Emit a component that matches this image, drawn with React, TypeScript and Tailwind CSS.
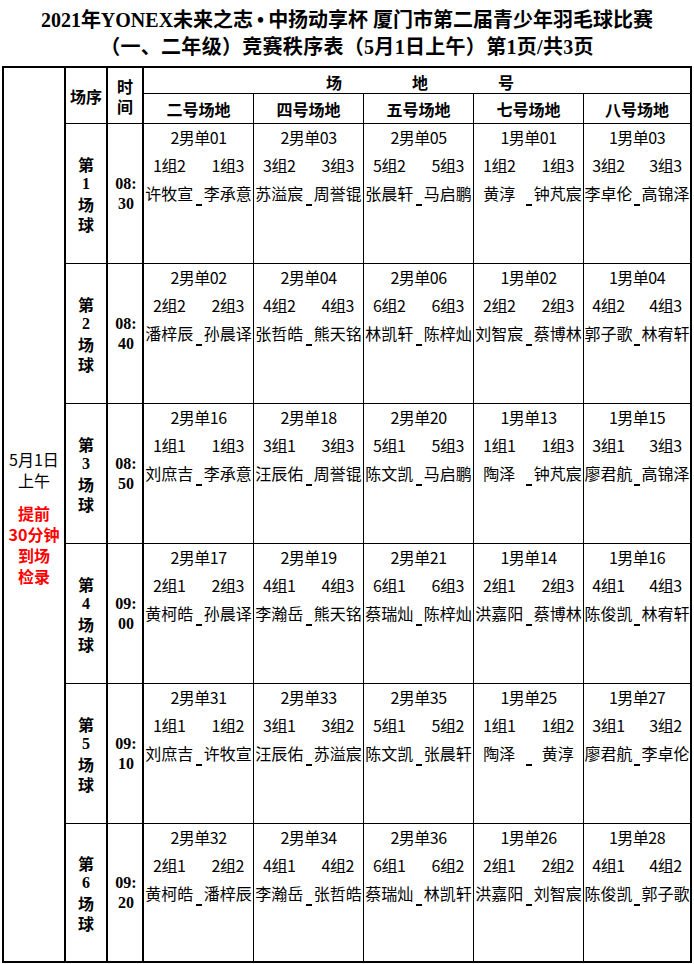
const COURTS = ["二号场地", "四号场地", "五号场地", "七号场地", "八号场地"];

type Match = { code: string; g1: string; g2: string; p1: string; p2: string };

const ROUNDS: { no: number; time: [string, string]; matches: Match[] }[] = [
  {
    no: 1,
    time: ["08:", "30"],
    matches: [
      { code: "2男单01", g1: "1组2", g2: "1组3", p1: "许牧宣", p2: "李承意" },
      { code: "2男单03", g1: "3组2", g2: "3组3", p1: "苏溢宸", p2: "周誉锟" },
      { code: "2男单05", g1: "5组2", g2: "5组3", p1: "张晨轩", p2: "马启鹏" },
      { code: "1男单01", g1: "1组2", g2: "1组3", p1: "黄淳", p2: "钟芃宸" },
      { code: "1男单03", g1: "3组2", g2: "3组3", p1: "李卓伦", p2: "高锦泽" },
    ],
  },
  {
    no: 2,
    time: ["08:", "40"],
    matches: [
      { code: "2男单02", g1: "2组2", g2: "2组3", p1: "潘梓辰", p2: "孙晨译" },
      { code: "2男单04", g1: "4组2", g2: "4组3", p1: "张哲皓", p2: "熊天铭" },
      { code: "2男单06", g1: "6组2", g2: "6组3", p1: "林凯轩", p2: "陈梓灿" },
      { code: "1男单02", g1: "2组2", g2: "2组3", p1: "刘智宸", p2: "蔡博林" },
      { code: "1男单04", g1: "4组2", g2: "4组3", p1: "郭子歌", p2: "林宥轩" },
    ],
  },
  {
    no: 3,
    time: ["08:", "50"],
    matches: [
      { code: "2男单16", g1: "1组1", g2: "1组3", p1: "刘庶吉", p2: "李承意" },
      { code: "2男单18", g1: "3组1", g2: "3组3", p1: "汪辰佑", p2: "周誉锟" },
      { code: "2男单20", g1: "5组1", g2: "5组3", p1: "陈文凯", p2: "马启鹏" },
      { code: "1男单13", g1: "1组1", g2: "1组3", p1: "陶泽", p2: "钟芃宸" },
      { code: "1男单15", g1: "3组1", g2: "3组3", p1: "廖君航", p2: "高锦泽" },
    ],
  },
  {
    no: 4,
    time: ["09:", "00"],
    matches: [
      { code: "2男单17", g1: "2组1", g2: "2组3", p1: "黄柯皓", p2: "孙晨译" },
      { code: "2男单19", g1: "4组1", g2: "4组3", p1: "李瀚岳", p2: "熊天铭" },
      { code: "2男单21", g1: "6组1", g2: "6组3", p1: "蔡瑞灿", p2: "陈梓灿" },
      { code: "1男单14", g1: "2组1", g2: "2组3", p1: "洪嘉阳", p2: "蔡博林" },
      { code: "1男单16", g1: "4组1", g2: "4组3", p1: "陈俊凯", p2: "林宥轩" },
    ],
  },
  {
    no: 5,
    time: ["09:", "10"],
    matches: [
      { code: "2男单31", g1: "1组1", g2: "1组2", p1: "刘庶吉", p2: "许牧宣" },
      { code: "2男单33", g1: "3组1", g2: "3组2", p1: "汪辰佑", p2: "苏溢宸" },
      { code: "2男单35", g1: "5组1", g2: "5组2", p1: "陈文凯", p2: "张晨轩" },
      { code: "1男单25", g1: "1组1", g2: "1组2", p1: "陶泽", p2: "黄淳" },
      { code: "1男单27", g1: "3组1", g2: "3组2", p1: "廖君航", p2: "李卓伦" },
    ],
  },
  {
    no: 6,
    time: ["09:", "20"],
    matches: [
      { code: "2男单32", g1: "2组1", g2: "2组2", p1: "黄柯皓", p2: "潘梓辰" },
      { code: "2男单34", g1: "4组1", g2: "4组2", p1: "李瀚岳", p2: "张哲皓" },
      { code: "2男单36", g1: "6组1", g2: "6组2", p1: "蔡瑞灿", p2: "林凯轩" },
      { code: "1男单26", g1: "2组1", g2: "2组2", p1: "洪嘉阳", p2: "刘智宸" },
      { code: "1男单28", g1: "4组1", g2: "4组2", p1: "陈俊凯", p2: "郭子歌" },
    ],
  },
];

const SERIF = "font-['Liberation_Serif','Noto_Sans_CJK_SC',serif]";
const SANS = "font-['Noto_Sans_CJK_SC',sans-serif]";

function MatchCell({ m, last, bottom }: { m: Match; last: boolean; bottom: boolean }) {
  return (
    <div
      className={`${bottom ? "" : "border-b"} ${last ? "" : "border-r"} border-black text-[16px] leading-[28px] text-black ${SANS}`}
    >
      <div className="-mt-[1px] text-center tracking-[-0.5px]">{m.code}</div>
      <div className="grid grid-cols-[1fr_8px_1fr] text-center tracking-[-0.5px]">
        <span>{m.g1}</span>
        <span />
        <span>{m.g2}</span>
      </div>
      <div className="grid grid-cols-[1fr_8px_1fr] items-end text-center">
        <span className="whitespace-nowrap">{m.p1}</span>
        <span className="relative h-[28px]">
          <span className="absolute left-[1px] top-[25px] h-[2px] w-[6px] bg-black" />
        </span>
        <span className="whitespace-nowrap">{m.p2}</span>
      </div>
    </div>
  );
}

export default function App() {
  return (
    <div className="w-[694px] h-[964px] bg-white text-black">
      <div className={`pt-[7px] text-center text-[20px] leading-[27px] font-bold ${SERIF}`}>
        <div>
          2021年YONEX未来之志<span className="mx-[4px]">•</span>中扬动享杯 厦门市第二届青少年羽毛球比赛
        </div>
        <div className="tracking-[0.3px]">（一、二年级）竞赛秩序表（5月1日上午）第1页/共3页</div>
      </div>

      <div className="ml-[2px] mt-[5px] w-[690px] border-2 border-black">
        <div className="grid grid-cols-[62px_42px_36px_110px_110px_110px_110px_106px] grid-rows-[26px_30px_140px_140px_140px_140px_140px_137px]">
          {/* left spanning column */}
          <div className="row-span-8 flex flex-col items-center justify-center border-r-2 border-black pt-[6px] text-[16px]">
            <div className={`text-center leading-[21px] ${SANS}`}>
              <div>5月1日</div>
              <div>上午</div>
            </div>
            <div className={`mt-[12px] text-center font-bold leading-[21px] text-[#ff0000] ${SANS}`}>
              <div>提前</div>
              <div>30分钟</div>
              <div>到场</div>
              <div>检录</div>
            </div>
          </div>

          <div className={`row-span-2 flex items-center justify-center border-r-2 border-b border-black text-[16px] font-bold ${SANS}`}>
            场序
          </div>
          <div className={`row-span-2 flex flex-col items-center justify-center border-r-2 border-b border-black text-[16px] font-bold leading-[20px] ${SANS}`}>
            <span>时</span>
            <span>间</span>
          </div>
          <div className={`col-span-5 flex items-center justify-center gap-[70px] border-b border-black pl-[6px] pt-[3px] text-[16px] font-bold ${SANS}`}>
            <span>场</span>
            <span>地</span>
            <span>号</span>
          </div>
          {COURTS.map((c, i) => (
            <div
              key={c}
              className={`flex items-center justify-center border-b border-black ${i < 4 ? "border-r" : ""} text-[16px] font-bold ${SANS}`}
            >
              {c}
            </div>
          ))}

          {ROUNDS.map((r, ri) => {
            const bottom = ri === ROUNDS.length - 1;
            return [
              <div
                key={`no-${r.no}`}
                className={`flex flex-col items-center justify-center border-r-2 ${bottom ? "" : "border-b"} border-black text-[16px] font-bold leading-[20px] ${SANS}`}
              >
                <span>第</span>
                <span className={SERIF}>{r.no}</span>
                <span>场</span>
                <span>球</span>
              </div>,
              <div
                key={`t-${r.no}`}
                className={`flex flex-col items-center justify-center border-r-2 ${bottom ? "" : "border-b"} border-black pl-[2px] text-[16px] font-bold leading-[20px] ${SERIF}`}
              >
                <span>{r.time[0]}</span>
                <span>{r.time[1]}</span>
              </div>,
              ...r.matches.map((m, mi) => (
                <MatchCell key={`${r.no}-${mi}`} m={m} last={mi === 4} bottom={bottom} />
              )),
            ];
          })}
        </div>
      </div>
    </div>
  );
}
